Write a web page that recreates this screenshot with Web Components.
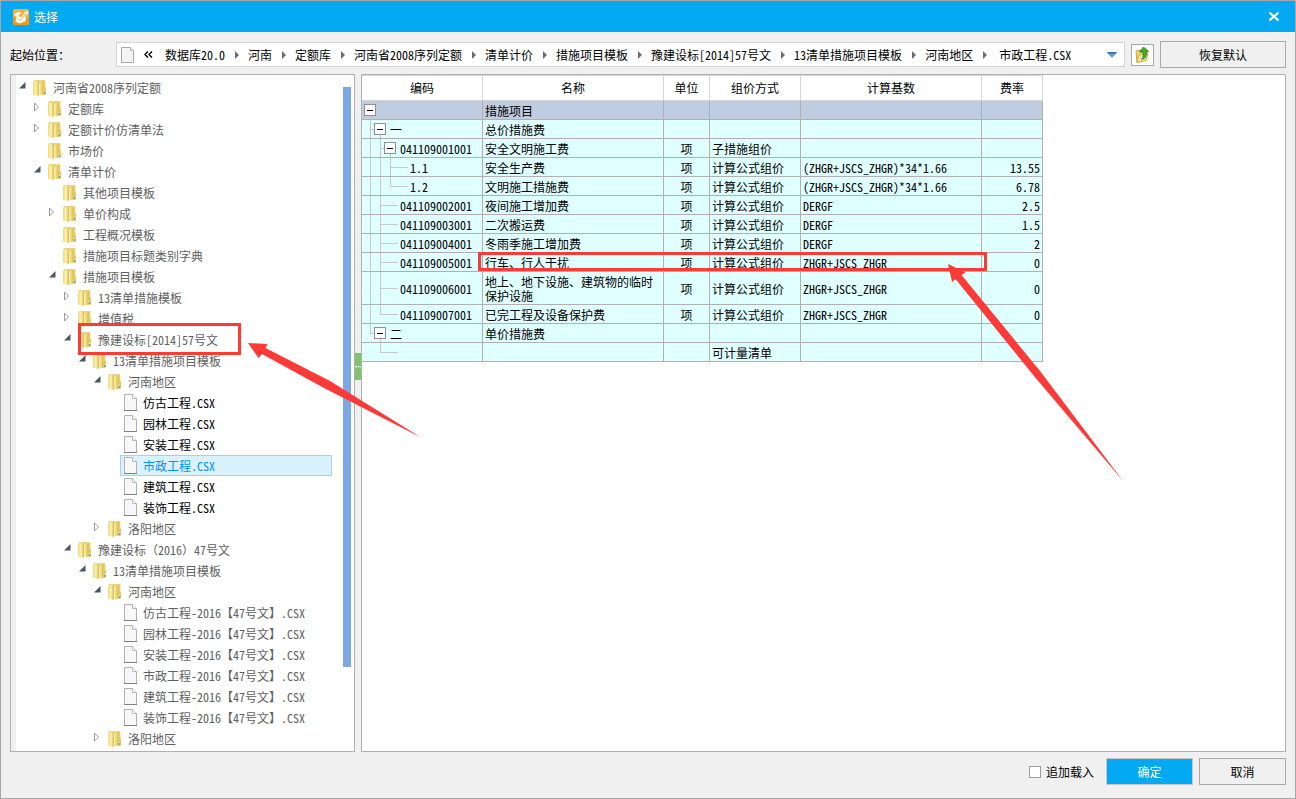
<!DOCTYPE html>
<html lang="zh-CN">
<head>
<meta charset="utf-8">
<title>选择</title>
<style>
  html, body { margin: 0; }
  body {
    font: 12px/14px "Noto Sans Mono CJK SC", "Noto Sans CJK SC", "Liberation Mono", monospace;
    text-spacing-trim: space-all;
    color: #000;
    background: #f0f0f0;
    --line: #b0b0b0;
    --line-soft: #d4d4d4;
    --accent: #03a9f2;
    --mark: #fc3a38;
  }
</style>
</head>
<body>

<template id="t-dialog">
  <style>
    :host { display: flex; flex-direction: column; position: relative; box-sizing: border-box; min-height: 100vh; border: 1px solid #a6a6a6; background: #f0f0f0; }
    .tools { display: flex; align-items: center; gap: 6px; padding: 9px 9px 6px; }
    main { flex: 1; display: flex; padding: 0 9px; }
    footer { display: flex; justify-content: flex-end; align-items: center; gap: 6px; padding: 6px 9px 13px; }
  </style>
  <slot name="title"></slot>
  <div class="tools"><slot name="tools"></slot></div>
  <main><slot></slot></main>
  <footer><slot name="footer"></slot></footer>
  <slot name="marks"></slot>
</template>

<template id="t-title">
  <style>
    :host { display: flex; align-items: center; gap: 5px; height: 31px; padding: 0 14px 0 12px; background: var(--accent); color: #fff; }
    h1 { flex: 1; margin: 0; font: inherit; }
    button { width: 14px; height: 14px; padding: 0; border: 0; background: none; color: inherit; }
    svg { display: block; }
  </style>
  <svg width="16" height="16" viewBox="0 0 16 16" aria-hidden="true">
    <rect width="16" height="16" rx="2" fill="#fbb03a"/>
    <rect y="8" width="16" height="8" rx="2" fill="#f59b12"/>
    <path d="M1 5.500L6 2.500L8 4L5.500 6.500L7 8.500L9.500 7L13 1.500L15.500 3.500L11.500 8L13.500 8.500L12 12.500L6.500 14.500L2.500 12.500L3.500 8Z" fill="#fff"/>
    <path d="M4.500 9L7 11.500L13.500 4.500" stroke="#f4b95a" fill="none"/>
  </svg>
  <h1><slot></slot></h1>
  <button type="button" aria-label="关闭">
    <svg width="14" height="14" viewBox="0 0 14 14"><path d="M2.500 2.500L11.500 10.500M11.500 2.500L2.500 10.500" stroke="currentColor" stroke-width="2.200"/></svg>
  </button>
</template>

<template id="t-path">
  <style>
    :host { flex: 1; min-width: 0; display: flex; align-items: center; }
    .label { flex: none; width: 106px; }
    .box { flex: 1; min-width: 0; display: flex; align-items: center; height: 23px; border: 1px solid var(--line-soft); background: #fff; white-space: nowrap; }
    .file { flex: none; margin-left: 4px; }
    .back { width: 26px; padding: 0; border: 0; background: none; }
    .back svg { display: block; margin: 0 auto; }
    nav { display: flex; padding-left: 4px; }
    a { display: flex; align-items: center; color: inherit; text-decoration: none; }
    a::after { content: ""; margin: 0 9px 0 10px; border-left: 4px solid #6c6c74; border-top: 4px solid transparent; border-bottom: 4px solid transparent; }
    .pick { flex: 1; min-width: 0; display: flex; align-items: center; padding: 0 7px 0 3px; }
    select { flex: 1; min-width: 0; appearance: none; margin: 0; padding: 0; border: 0; background: none; font: inherit; color: inherit; }
  </style>
  <span class="label" id="lb">起始位置：</span>
  <div class="box">
    <svg class="file" width="14" height="16" viewBox="0 0 14 16" aria-hidden="true"><path d="M.5.5h9l3 3v12H.5z" fill="#f4f4f4" stroke="#a8a8a8"/><path d="M9.500.5v3h3" fill="#fff" stroke="#b4b4b4"/></svg>
    <button class="back" type="button" aria-label="上级"><svg width="9" height="7" viewBox="0 0 9 7"><path d="M4 .5L1 3.500L4 6.500M8 .5L5 3.500L8 6.500" fill="none" stroke="#000" stroke-width="1.400"/></svg></button>
    <nav></nav>
    <div class="pick">
      <select aria-labelledby="lb"><option>市政工程.CSX</option><option>仿古工程.CSX</option><option>园林工程.CSX</option></select>
      <svg width="10" height="6" viewBox="0 0 10 6" aria-hidden="true"><path d="M0 .5h10L5 6z" fill="#5b9fd0"/><path d="M0 0h10L9 1.500H1z" fill="#2f6f9f"/></svg>
    </div>
  </div>
</template>

<template id="t-button">
  <style>
    :host { display: block; width: 87px; }
    :host([wide]) { width: 126px; }
    :host([icon]) { width: 23px; }
    button { display: grid; place-items: center; width: 100%; height: 27px; padding: 0; border: 1px solid #a8a8a8; background: #f0f0f0; font: inherit; color: inherit; }
    :host([icon]) button { height: 22px; background: #fff; }
    :host([primary]) button { background: var(--accent); border-color: #c8c8c8; color: #fff; }
  </style>
  <button type="button"><slot></slot></button>
</template>

<template id="t-check">
  <style>
    :host { display: block; margin-right: 6px; }
    label { display: flex; align-items: center; gap: 5px; }
    input { appearance: none; width: 12px; height: 12px; margin: 0; border: 1px solid #9c9c9c; background: #fff; }
    input:checked { background: var(--accent); }
  </style>
  <label><input type="checkbox"><slot></slot></label>
</template>

<template id="t-tree">
  <style>
    :host { flex: none; display: flex; box-sizing: border-box; width: 345px; border: 1px solid var(--line); background: #fff; }
    .gutter { width: 5px; background: #f0f0f0; }
    .nodes { flex: 1; padding: 2px 0; }
    .bar { width: 8px; height: 580px; margin: 12px 3px 0 0; background: #7fa6e4; }
  </style>
  <div class="gutter"></div>
  <div class="nodes" role="tree"><slot></slot></div>
  <div class="bar"></div>
</template>

<template id="t-node">
  <style>
    :host { display: flex; height: 21px; padding-left: calc(2px + 15px * var(--level, 0)); color: #606060; white-space: nowrap; }
    :host([file]) { color: #000; }
    :host([file][dim]) { color: #606060; }
    .twist { flex: none; width: 12px; height: 21px; padding: 0; border: 0; background: none; text-align: left; }
    .twist svg, .item svg { display: block; flex: none; }
    .item { flex: 1; display: flex; align-items: center; gap: 6px; box-sizing: border-box; height: 21px; margin-right: 11px; padding: 0 0 0 2px; border: 1px solid transparent; background: none; font: inherit; color: inherit; text-align: left; }
    :host([selected]) .item { color: #0090ff; background: #d9f2fd; border-color: #a9cfea; }
  </style>
  <span class="twist"></span>
  <button type="button" class="item"><span class="icon"></span><slot></slot></button>
</template>

<template id="t-split">
  <style>
    :host { flex: none; width: 6px; }
    button { display: block; width: 6px; height: 27px; margin: 279px 0 0; padding: 0; border: 0; background: #7fc36a; }
    svg { display: block; }
  </style>
  <button type="button" aria-label="收起"><svg width="6" height="7" viewBox="0 0 6 7"><path d="M0 3h1v1h1M3 4h1v-1M5 4h1" fill="none" stroke="#fff"/></svg></button>
</template>

<template id="t-table">
  <style>
    :host { flex: 1; min-width: 0; border: 1px solid var(--line); background: #fff; }
    table { table-layout: fixed; width: 681px; border-collapse: separate; border-spacing: 0; }
    th { box-sizing: border-box; height: 26px; padding: 0; border: 1px solid var(--line-soft); border-left: 0; font-weight: normal; }
    td { box-sizing: border-box; height: 19px; padding: 3px 2px 1px; line-height: 14px; border: 1px solid var(--line); border-width: 0 1px 1px 0; background-color: #e0ffff; background-repeat: no-repeat; }
    td:not(.wrap) { white-space: nowrap; }
    tr.root td { background-color: #c0ccdf; }
    .u { text-align: center; }
    .r { text-align: right; }
    .code { padding-top: 0; padding-bottom: 0; }
    .cell { display: flex; align-items: center; gap: 4px; height: 18px; }
    .cell span { padding-top: 2px; }
    .cell button { display: grid; place-items: center; box-sizing: border-box; flex: none; width: 12px; height: 12px; padding: 0; border: 1px solid #8f8f8f; background: #fff; }
    .cell button::before { content: ""; width: 6px; height: 1px; background: #000; }
  </style>
  <table>
    <colgroup><col style="width:121px"><col style="width:181px"><col style="width:46px"><col style="width:91px"><col style="width:181px"><col style="width:61px"></colgroup>
    <thead><tr><th>编码</th><th>名称</th><th>单位</th><th>组价方式</th><th>计算基数</th><th>费率</th></tr></thead>
    <tbody></tbody>
  </table>
</template>

<template id="t-marks">
  <style>
    :host { position: absolute; inset: -1px; pointer-events: none; overflow: hidden; }
    svg { display: block; width: 100%; height: 100%; fill: var(--mark); }
    rect { fill: none; stroke: var(--mark); stroke-width: 3; }
  </style>
  <svg aria-hidden="true">
    <rect x="79.500" y="324.500" width="160" height="29"/>
    <rect x="479.500" y="253.500" width="506" height="16"/>
    <path d="M248 343L267.500 344L265.500 348L330 381L421 437.500L324 388L262 354L258.500 358Z"/>
    <path d="M948 264L965.500 272.500L961.500 275L1040 371L1123.500 481.500L1034 376L955.500 279L952 282Z"/>
  </svg>
</template>

<app-dialog>
  <title-bar slot="title">选择</title-bar>
  <path-bar slot="tools" path="数据库20.0/河南/定额库/河南省2008序列定额/清单计价/措施项目模板/豫建设标[2014]57号文/13清单措施项目模板/河南地区"></path-bar>
  <push-button slot="tools" icon>
    <svg width="16" height="16" viewBox="0 0 16 16" role="img" aria-label="打开"><path d="M1 4l4-1 1 1.500 5-.5v9l-9 2.500z" fill="#f3d876" stroke="#c9a33c"/><path d="M2 15.500L4 8l9-2-2 7.500z" fill="#fbeb9e" stroke="#cfa93e"/><path d="M8.500 0L13.500 4.500H11.500C12 9 10.500 11.500 6.500 12.500C8.500 10.500 8.500 8 8 5H4.500Z" fill="#3fae2f" stroke="#1f7c1c" stroke-width=".8"/></svg>
  </push-button>
  <push-button slot="tools" wide>恢复默认</push-button>

  <tree-view>
    <tree-node level="0" state="open">河南省2008序列定额</tree-node>
    <tree-node level="1" state="closed">定额库</tree-node>
    <tree-node level="1" state="closed">定额计价仿清单法</tree-node>
    <tree-node level="1">市场价</tree-node>
    <tree-node level="1" state="open">清单计价</tree-node>
    <tree-node level="2">其他项目模板</tree-node>
    <tree-node level="2" state="closed">单价构成</tree-node>
    <tree-node level="2">工程概况模板</tree-node>
    <tree-node level="2">措施项目标题类别字典</tree-node>
    <tree-node level="2" state="open">措施项目模板</tree-node>
    <tree-node level="3" state="closed">13清单措施模板</tree-node>
    <tree-node level="3" state="closed">增值税</tree-node>
    <tree-node level="3" state="open">豫建设标[2014]57号文</tree-node>
    <tree-node level="4" state="open">13清单措施项目模板</tree-node>
    <tree-node level="5" state="open">河南地区</tree-node>
    <tree-node level="6" file>仿古工程.CSX</tree-node>
    <tree-node level="6" file>园林工程.CSX</tree-node>
    <tree-node level="6" file>安装工程.CSX</tree-node>
    <tree-node level="6" file selected>市政工程.CSX</tree-node>
    <tree-node level="6" file>建筑工程.CSX</tree-node>
    <tree-node level="6" file>装饰工程.CSX</tree-node>
    <tree-node level="5" state="closed">洛阳地区</tree-node>
    <tree-node level="3" state="open">豫建设标（2016）47号文</tree-node>
    <tree-node level="4" state="open">13清单措施项目模板</tree-node>
    <tree-node level="5" state="open">河南地区</tree-node>
    <tree-node level="6" file dim>仿古工程-2016【47号文】.CSX</tree-node>
    <tree-node level="6" file dim>园林工程-2016【47号文】.CSX</tree-node>
    <tree-node level="6" file dim>安装工程-2016【47号文】.CSX</tree-node>
    <tree-node level="6" file dim>市政工程-2016【47号文】.CSX</tree-node>
    <tree-node level="6" file dim>建筑工程-2016【47号文】.CSX</tree-node>
    <tree-node level="6" file dim>装饰工程-2016【47号文】.CSX</tree-node>
    <tree-node level="5" state="closed">洛阳地区</tree-node>
  </tree-view>
  <split-bar></split-bar>
  <measure-table></measure-table>

  <check-field slot="footer">追加载入</check-field>
  <push-button slot="footer" primary>确定</push-button>
  <push-button slot="footer">取消</push-button>
  <mark-layer slot="marks"></mark-layer>
</app-dialog>

<script>
  class Base extends HTMLElement {
    constructor() {
      super();
      this.attachShadow({ mode: "open" })
        .append(document.getElementById(this.constructor.template).content.cloneNode(true));
    }
    $(selector) { return this.shadowRoot.querySelector(selector); }
  }

  const simple = (name, template) =>
    customElements.define(name, class extends Base { static template = template; });
  simple("app-dialog", "t-dialog");
  simple("title-bar", "t-title");
  simple("push-button", "t-button");
  simple("check-field", "t-check");
  simple("tree-view", "t-tree");
  simple("split-bar", "t-split");
  simple("mark-layer", "t-marks");

  customElements.define("path-bar", class extends Base {
    static template = "t-path";
    connectedCallback() {
      this.$("nav").replaceChildren(...this.getAttribute("path").split("/").map(text => {
        const link = document.createElement("a");
        link.href = "#";
        link.textContent = text;
        return link;
      }));
    }
  });

  const FOLDER = `<svg width="14" height="16" viewBox="0 0 14 16">
    <defs>
      <linearGradient id="a"><stop offset="0" stop-color="#f0d878"/><stop offset=".5" stop-color="#fbf3b4"/><stop offset="1" stop-color="#d9b848"/></linearGradient>
      <linearGradient id="b"><stop offset="0" stop-color="#fdf6bc"/><stop offset="1" stop-color="#dcb93c"/></linearGradient>
    </defs>
    <path d="M1 .5h11v14H1z" fill="#ecd27a" stroke="#e3c667" stroke-width=".6"/>
    <path d="M0 1.500L4.500 1L6 2v13.500L4.500 16L0 14.500z" fill="url(#a)"/>
    <path d="M6 3L10.500 1v12.500L6 15.500z" fill="url(#b)"/>
    <path d="M10.500 7.500h2.500v7h-4l1.500-1z" fill="#e6c75c"/>
    <path d="M11 11h1v1h-1z" fill="#fff"/><path d="M11 12h1.200v2H11z" fill="#3fa6dd"/></svg>`;
  const FILE = `<svg width="14" height="17" viewBox="0 0 14 17">
    <path d="M1.500.5h8l4 4v12h-12z" fill="#f8f8f8" stroke="#b0b0b0"/><path d="M1 16.500h13" stroke="#808080"/>
    <path d="M9.500.5v4h4" fill="#fff" stroke="#b8b8b8"/></svg>`;
  const TWIST = {
    open: `<svg width="12" height="21"><path d="M7.500 5v6.500H1z" fill="#4a5866"/></svg>`,
    closed: `<svg width="12" height="21"><path d="M1.500 5v8L5.500 9z" fill="#fff" stroke="#999"/></svg>`
  };

  customElements.define("tree-node", class extends Base {
    static template = "t-node";
    connectedCallback() {
      this.style.setProperty("--level", this.getAttribute("level"));
      this.setAttribute("role", "treeitem");
      this.$(".icon").innerHTML = this.hasAttribute("file") ? FILE : FOLDER;
      this.$(".twist").innerHTML = TWIST[this.getAttribute("state")] || "";
    }
  });

  /* guides: v = full-height line, e = line ending at this row, per column;
     box = depth of the collapse box, stub = column of the horizontal branch */
  const F = "计算公式组价", Z = "ZHGR+JSCS_ZHGR", P = "(ZHGR+JSCS_ZHGR)*34*1.66";
  const ROWS = [
    ["",    { box: 0 },               "", "措施项目", "", "", "", ""],
    ["v",   { box: 1 },               "一", "总价措施费", "", "", ""],
    ["vv",  { box: 2 },               "041109001001", "安全文明施工费", "项", "子措施组价", "", ""],
    ["vvv", { stub: 2 },              "1.1", "安全生产费", "项", F, P, "13.55"],
    ["vve", { stub: 2 },              "1.2", "文明施工措施费", "项", F, P, "6.78"],
    ["vv",  { stub: 1 },              "041109002001", "夜间施工增加费", "项", F, "DERGF", "2.5"],
    ["vv",  { stub: 1 },              "041109003001", "二次搬运费", "项", F, "DERGF", "1.5"],
    ["vv",  { stub: 1 },              "041109004001", "冬雨季施工增加费", "项", F, "DERGF", "2"],
    ["vv",  { stub: 1 },              "041109005001", "行车、行人干扰", "项", F, Z, "0"],
    ["vv",  { stub: 1 },              "041109006001", "地上、地下设施、建筑物的临时保护设施", "项", F, Z, "0"],
    ["ve",  { stub: 1 },              "041109007001", "已完工程及设备保护费", "项", F, Z, "0"],
    ["e",   { box: 1 },               "二", "单价措施费", "", "", "", ""],
    [" e",  { stub: 1 },              "", "", "", "可计量清单", "", ""]
  ];

  customElements.define("measure-table", class extends Base {
    static template = "t-table";
    connectedCallback() {
      const body = this.$("tbody");
      ROWS.forEach(([guides, mark, code, name, unit, mode, basis, rate = ""], i) => {
        const row = body.insertRow();
        if (i === 0) row.className = "root";
        const first = row.insertCell();
        first.className = "code";
        const layers = [];
        const line = (x, y, w, h) =>
          layers.push(`linear-gradient(#c8c8c8,#c8c8c8) ${x}px ${y}/${w} ${h} no-repeat`);
        [...guides].forEach((g, d) => {
          if (g === "v") line(8 + 10 * d, "0", "1px", "100%");
          if (g === "e") line(8 + 10 * d, "0", "1px", "50%");
        });
        const boxed = mark.box !== undefined;
        if (boxed) {
          line(8 + 10 * mark.box, "100%", "1px", "4px");
          if (mark.box) line(10 * mark.box - 2, "50%", "5px", "1px");
        } else line(8 + 10 * mark.stub, "50%", "18px", "1px");
        first.style.background = layers.join(",");
        first.style.backgroundColor = i === 0 ? "#c0ccdf" : "#e0ffff";
        const cell = document.createElement("div");
        cell.className = "cell";
        cell.style.paddingLeft = (boxed ? 10 * mark.box : 26 + 10 * mark.stub) + "px";
        if (boxed) {
          const toggle = document.createElement("button");
          toggle.type = "button";
          toggle.setAttribute("aria-label", "折叠");
          cell.append(toggle);
        }
        const label = document.createElement("span");
        label.textContent = code;
        cell.append(label);
        first.append(cell);
        [[name, "wrap"], [unit, "u"], [mode, ""], [basis, ""], [rate, "r"]].forEach(([text, cls]) => {
          const td = row.insertCell();
          td.className = cls;
          td.textContent = text;
        });
      });
    }
  });
</script>
</body>
</html>
